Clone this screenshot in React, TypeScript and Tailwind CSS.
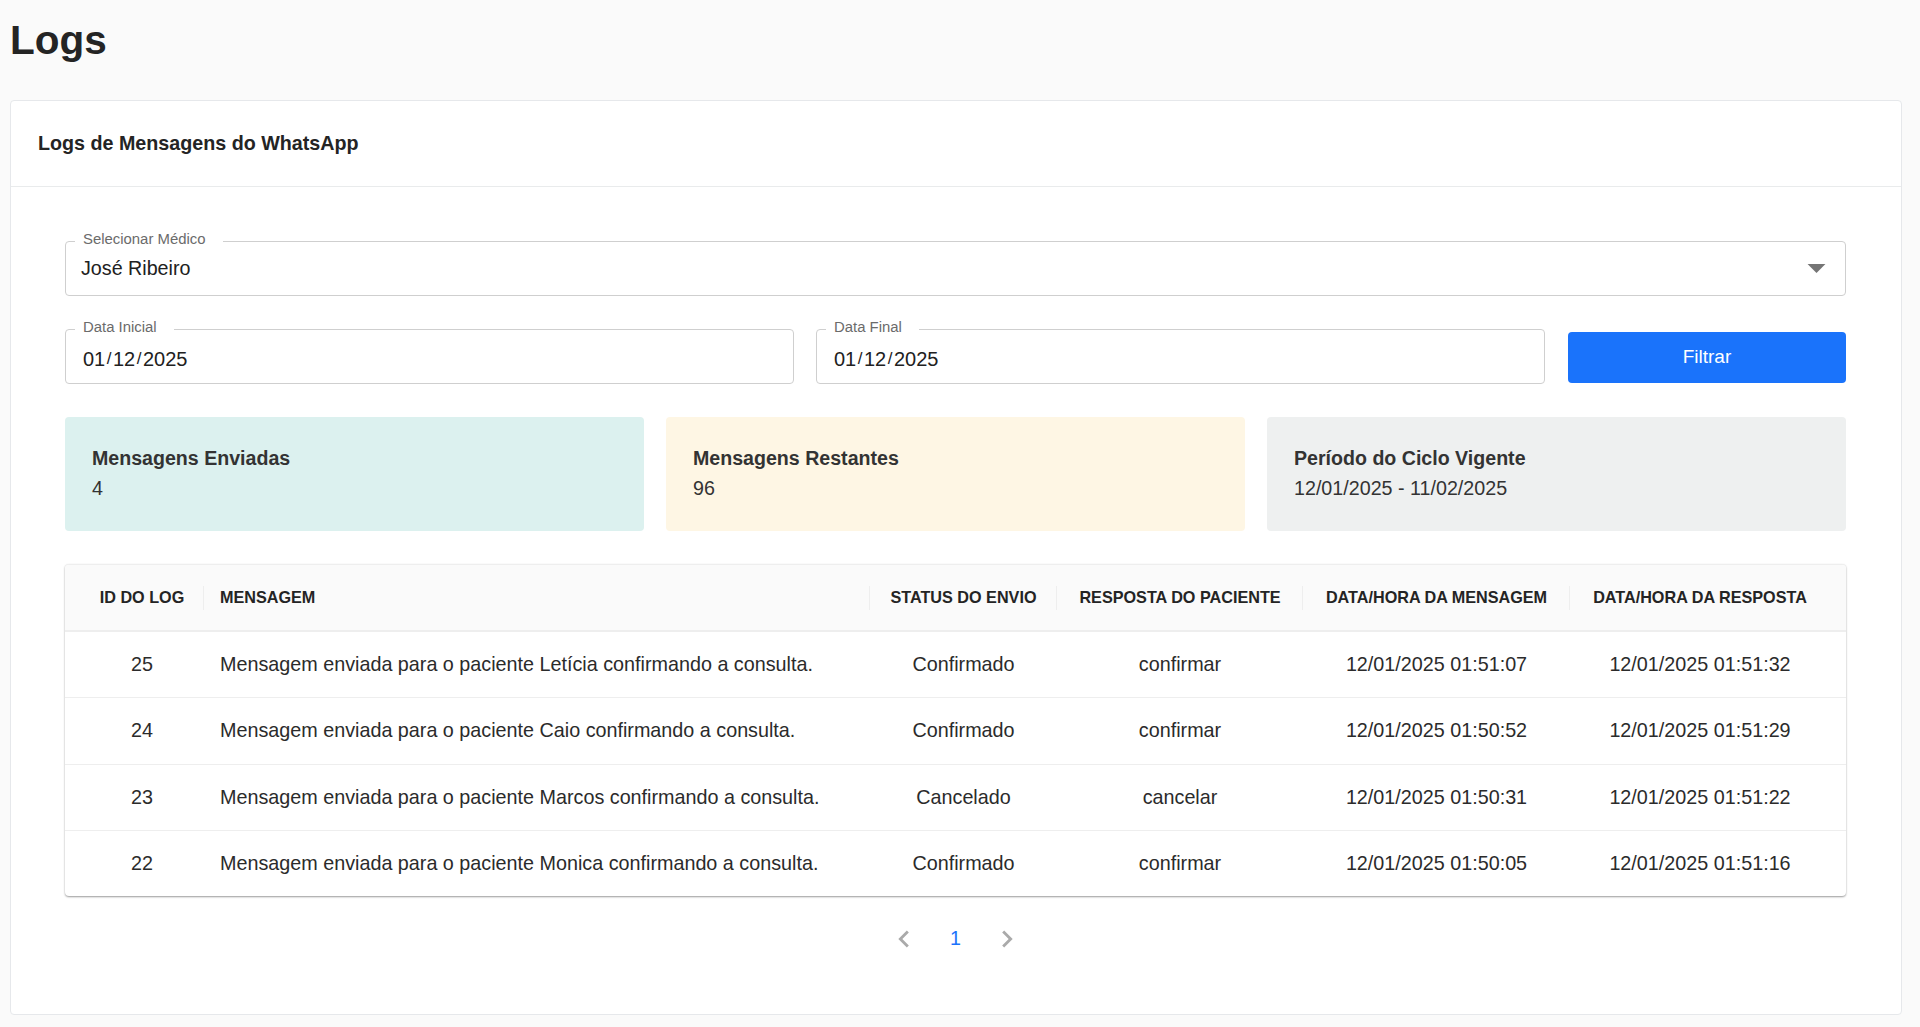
const rows = [
  { id: 25, nome: 'Letícia', status: 'Confirmado', resposta: 'confirmar', envio: '12/01/2025 01:51:07', retorno: '12/01/2025 01:51:32' },
  { id: 24, nome: 'Caio', status: 'Confirmado', resposta: 'confirmar', envio: '12/01/2025 01:50:52', retorno: '12/01/2025 01:51:29' },
  { id: 23, nome: 'Marcos', status: 'Cancelado', resposta: 'cancelar', envio: '12/01/2025 01:50:31', retorno: '12/01/2025 01:51:22' },
  { id: 22, nome: 'Monica', status: 'Confirmado', resposta: 'confirmar', envio: '12/01/2025 01:50:05', retorno: '12/01/2025 01:51:16' },
];

const colunas = 'grid grid-cols-[139px_666px_187px_246px_267px_276px]';

function Campo({ label, children, className }: { label: string; children: React.ReactNode; className: string }) {
  return (
    <div className={`relative rounded-[4px] border-[1.5px] border-[#cfcfcf] bg-white leading-[26px] text-[#212121] ${className}`}>
      <span className="absolute -top-[13px] left-[9px] bg-white pl-[8px] pr-[17px] text-[14.9px] leading-[20px] text-[#6b6b6b]">{label}</span>
      {children}
    </div>
  );
}

// o input de data do navegador desenha as barras menores e um pouco acima
function Data({ dia, mes, ano }: { dia: string; mes: string; ano: string }) {
  const barra = <span className="mx-[1.5px] align-[2px] text-[17px]">/</span>;
  return (
    <>
      {dia}
      {barra}
      {mes}
      {barra}
      {ano}
    </>
  );
}

function Stat({ titulo, valor, cor }: { titulo: string; valor: string; cor: string }) {
  return (
    <div className={`h-[114px] flex-1 rounded-[4px] pl-[27px] pt-[26px] text-[#333] ${cor}`}>
      <div className="text-[19.6px] font-bold leading-[30px]">{titulo}</div>
      <div className="text-[19.7px] leading-[30px]">{valor}</div>
    </div>
  );
}

function Cab({ texto, className = 'justify-center', separador = true }: { texto: string; className?: string; separador?: boolean }) {
  return (
    <div className={`relative flex items-center text-[16.2px] font-bold text-[#242424] ${className}`}>
      <span className="whitespace-nowrap">{texto}</span>
      {separador && <span className="absolute right-0 top-1/2 h-6 w-px -translate-y-1/2 bg-[#eeeeee]" />}
    </div>
  );
}

export default function App() {
  return (
    <div className="min-h-[1027px] bg-[#fafafa] pl-[10px] pr-[18px] pb-3 font-['Liberation_Sans',sans-serif]">
      <h1 className="pt-[16px] pb-[36px] text-[40.5px] font-bold leading-[48px] text-[#242424]">Logs</h1>

      <div className="h-[915px] rounded-[4px] border border-[#e6e8eb] bg-white">
        <div className="flex h-[86px] items-center border-b border-[#e9ebec] pl-[27px] text-[19.7px] font-bold text-[#242424]">
          Logs de Mensagens do WhatsApp
        </div>

        <div className="flex flex-col pl-[54px] pr-[55px] pt-[54px]">
          <div className="relative">
            <Campo label="Selecionar Médico" className="h-[55px] pl-[15px] pt-[13px] text-[19.7px]">
              José Ribeiro
            </Campo>
            <svg viewBox="0 0 24 24" className="absolute right-[8px] top-[5px] h-[43px] w-[43px] fill-[#757575]">
              <path d="M7 10l5 5 5-5z" />
            </svg>
          </div>

          <div className="mt-[33px] flex items-center gap-[22px]">
            <Campo label="Data Inicial" className="h-[55px] w-[729px] pl-[17px] pt-[16px] text-[20px]">
              <Data dia="01" mes="12" ano="2025" />
            </Campo>
            <Campo label="Data Final" className="h-[55px] w-[729px] pl-[17px] pt-[16px] text-[20px]">
              <Data dia="01" mes="12" ano="2025" />
            </Campo>
            <button className="ml-[1px] mt-[1px] h-[51px] w-[278px] rounded-[4px] bg-[#1a73fb] text-[19px] text-white">Filtrar</button>
          </div>

          <div className="mt-[33px] flex gap-[22px]">
            <Stat titulo="Mensagens Enviadas" valor="4" cor="bg-[#dcf1ef]" />
            <Stat titulo="Mensagens Restantes" valor="96" cor="bg-[#fef6e4]" />
            <Stat titulo="Período do Ciclo Vigente" valor="12/01/2025 - 11/02/2025" cor="bg-[#eef0f0]" />
          </div>

          <div className="mt-[33px] overflow-hidden rounded-[4px] border-t border-[#eee] bg-white shadow-[0_1px_2px_rgba(0,0,0,0.4)]">
            <div className={`${colunas} h-[67px] border-b-2 border-[#eeeeee] bg-[#fafafa]`}>
              <Cab texto="ID DO LOG" className="justify-center pl-[15px]" />
              <Cab texto="MENSAGEM" className="pl-4" />
              <Cab texto="STATUS DO ENVIO" />
              <Cab texto="RESPOSTA DO PACIENTE" />
              <Cab texto="DATA/HORA DA MENSAGEM" />
              <Cab texto="DATA/HORA DA RESPOSTA" className="justify-center pr-[16px]" separador={false} />
            </div>
            {rows.map((row) => (
              <div key={row.id} className={`${colunas} h-[66.4px] items-center border-b border-[#eeeeee] text-center text-[19.75px] text-[#2b2b2b] last:h-[65px] last:border-b-0`}>
                <div className="pl-[15px]">{row.id}</div>
                <div className="whitespace-nowrap pl-4 text-left">Mensagem enviada para o paciente {row.nome} confirmando a consulta.</div>
                <div>{row.status}</div>
                <div>{row.resposta}</div>
                <div>{row.envio}</div>
                <div className="pr-[16px]">{row.retorno}</div>
              </div>
            ))}
          </div>

          <div className="mt-[26px] flex items-center justify-center gap-[29px] text-[19.7px] text-[#1a73fb]">
            <svg viewBox="0 0 24 24" className="h-[34px] w-[34px] fill-[#aaa]">
              <path d="M15.41 7.41 14 6l-6 6 6 6 1.41-1.41L10.83 12z" />
            </svg>
            <span>1</span>
            <svg viewBox="0 0 24 24" className="h-[34px] w-[34px] fill-[#aaa]">
              <path d="M10 6 8.59 7.41 13.17 12l-4.58 4.59L10 18l6-6z" />
            </svg>
          </div>
        </div>
      </div>
    </div>
  );
}
